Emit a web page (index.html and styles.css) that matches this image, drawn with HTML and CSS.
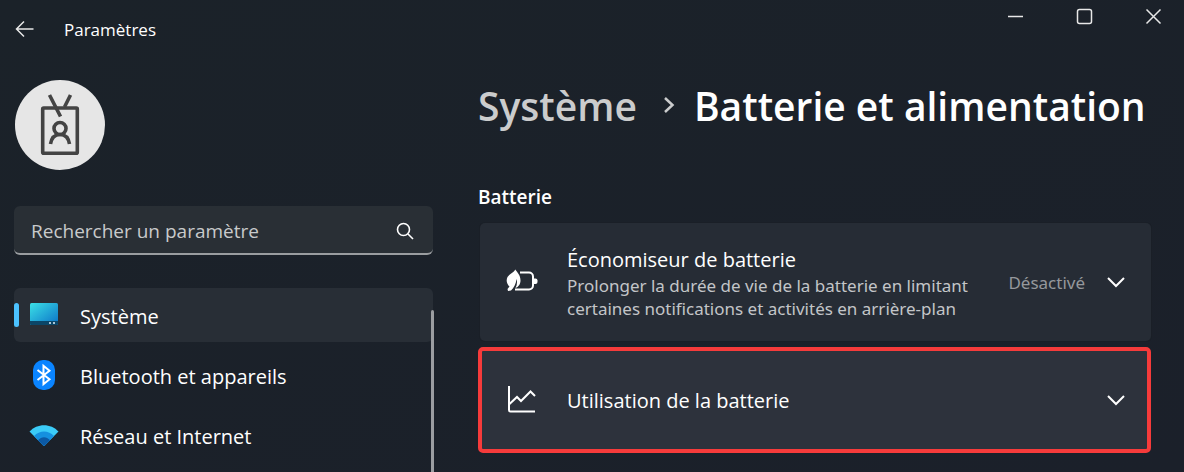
FILE: index.html
```html
<!DOCTYPE html>
<html lang="fr">
  <head>
    <meta charset="UTF-8" />
    <meta name="viewport" content="width=device-width, initial-scale=1.0" />
    <title>Paramètres</title>
    <link rel="stylesheet" href="styles.css">
  </head>
  <body>
    <header class="titlebar">
      <button class="back" type="button" aria-label="Retour">
        <svg width="20" height="18" viewBox="0 0 20 18"><path d="M9 1.5 1.5 9 9 16.500M1.500 9H18.500" /></svg>
      </button>
      <span class="app-name">Paramètres</span>
      <div class="window-controls">
        <button type="button" aria-label="Réduire">
          <svg width="17" height="17" viewBox="0 0 17 17"><path d="M1 8.500H16" /></svg>
        </button>
        <button type="button" aria-label="Agrandir">
          <svg width="17" height="17" viewBox="0 0 17 17"><rect x="1.500" y="1.500" width="14" height="14" rx="2" /></svg>
        </button>
        <button type="button" aria-label="Fermer">
          <svg width="17" height="17" viewBox="0 0 17 17"><path d="M1.500 1.500 15.500 15.500M15.500 1.500 1.500 15.500" /></svg>
        </button>
      </div>
    </header>

    <div class="layout">
      <aside class="sidebar">
        <div class="avatar">
          <svg width="90" height="90" viewBox="0 0 90 90">
            <rect x="27.700" y="28" width="34.600" height="45.300" rx="1" />
            <path d="M34.500 15 45.500 36.500M55.500 15 49.500 27" />
            <circle cx="45" cy="48.500" r="6" />
            <path d="M35.500 64c1-6 4.500-9.500 9.500-9.500s8.500 3.500 9.500 9.500" />
          </svg>
        </div>

        <form class="search">
          <input type="search" placeholder="Rechercher un paramètre" aria-label="Rechercher un paramètre" />
          <button type="button" aria-label="Rechercher">
            <svg width="18" height="18" viewBox="0 0 18 18"><circle cx="7.500" cy="7.500" r="6" /><path d="m12 12 5 5" /></svg>
          </button>
        </form>

        <nav class="menu">
          <a class="active" href="#">
            <svg width="30" height="30" viewBox="0 0 30 30">
              <defs>
                <linearGradient id="screen" x1="0" y1="0" x2="1" y2="1">
                  <stop offset="0" stop-color="#3be0e6" />
                  <stop offset="1" stop-color="#0b71c7" />
                </linearGradient>
              </defs>
              <rect x="1" y="3" width="28" height="22" rx="1.500" fill="url(#screen)" />
              <path d="M1 21h28v2.500a1.500 1.500 0 0 1-1.500 1.500h-25A1.500 1.500 0 0 1 1 23.500z" fill="#0b4668" />
              <path d="M20 22h2v2h-2zM24 22h2v2h-2z" fill="#a9c4d6" />
            </svg>
            <span>Système</span>
          </a>
          <a href="#">
            <svg width="30" height="30" viewBox="0 0 30 30">
              <rect x="4" width="22" height="30" rx="10" fill="#0a84ff" />
              <path d="m8.500 10 12 9.200-6 5v-18.400l6 5-12 9.200" fill="none" stroke="#fff" stroke-width="2" />
            </svg>
            <span>Bluetooth et appareils</span>
          </a>
          <a href="#">
            <svg width="30" height="30" viewBox="0 0 30 30">
              <path d="M.500 11.500C8 3 22 3 29.500 11.500L16 25.300q-1 1-2 0z" fill="#3bcbf7" />
              <path d="M5 16.100c5.500-6 14.500-6 20 0l-9 9.200q-1 1-2 0z" fill="#1590df" />
              <path d="M9 20.200c3.500-4 8.500-4 12 0l-5 5.100q-1 1-2 0z" fill="#0c59a4" />
            </svg>
            <span>Réseau et Internet</span>
          </a>
          <span class="scrollbar"></span>
        </nav>
      </aside>

      <main class="content">
        <h1 class="breadcrumb">
          <a href="#">Système</a>
          <svg width="12" height="18" viewBox="0 0 12 18"><path d="m2 2 7.500 7L2 16" /></svg>
          <span>Batterie et alimentation</span>
        </h1>

        <h2 class="section-title">Batterie</h2>

        <div class="cards">
          <button class="card" type="button">
            <svg class="card-icon" width="32" height="32" viewBox="0 0 32 32">
              <path d="M14 6.500h9a4 4 0 0 1 4 4v9a4 4 0 0 1-4 4H9" />
              <path class="solid" d="M27 12.500h2.500q2 0 2 2v1.500q0 2-2 2H27z" />
              <path class="solid" d="M9.300 3.500C11 6 14.500 9 14.500 14.500c0 3.500-2 6.500-5 7.500 1.500-3 2-6 1-9-.500 5-2.500 8.500-5.500 11.500l-3 .500-.500-2 2-2.500C.500 17.500 0 14 1.500 11 3 8 7 7.500 9.300 3.500z" />
            </svg>
            <span class="card-text">
              <span class="card-title">Économiseur de batterie</span>
              <span class="card-info">Prolonger la durée de vie de la batterie en limitant certaines notifications et activités en arrière-plan</span>
            </span>
            <span class="card-state">Désactivé</span>
            <svg class="chevron" width="18" height="12" viewBox="0 0 18 12"><path d="m1 2 8 8 8-8" /></svg>
          </button>

          <button class="card highlighted" type="button">
            <svg class="card-icon" width="32" height="32" viewBox="0 0 32 32">
              <path d="M3 2v24q0 1.500 1.500 1.500H29M3.500 20 11 13l4 4L24.500 7.500l4.500 4.500" />
            </svg>
            <span class="card-text">
              <span class="card-title">Utilisation de la batterie</span>
            </span>
            <svg class="chevron" width="18" height="12" viewBox="0 0 18 12"><path d="m1 2 8 8 8-8" /></svg>
          </button>
        </div>
      </main>
    </div>
  </body>
</html>
```

FILE: styles.css
```css
* {
  margin: 0;
  padding: 0;
  box-sizing: border-box;
}

body {
  font-family: "Open Sans", "Noto Sans", sans-serif;
  font-size: 20px;
  color: #fff;
  background: linear-gradient(160deg, #1b2229, #1b202a);
  height: 100vh;
  overflow: hidden;
  display: flex;
  flex-direction: column;
}

button {
  font: inherit;
  color: inherit;
  background: none;
  border: none;
}

a {
  color: inherit;
  text-decoration: none;
}

svg {
  display: block;
  flex-shrink: 0;
}

/* Title bar */
.titlebar {
  display: flex;
  align-items: center;
  height: 58px;
  padding-left: 15px;
}
.titlebar svg {
  fill: none;
  stroke: #e8e8e8;
  stroke-width: 1.5;
}
.app-name {
  margin-left: 29px;
  font-size: 17px;
}
.window-controls {
  display: flex;
  gap: 7px;
  align-self: flex-start;
  margin-left: auto;
}
.window-controls button {
  display: flex;
  align-items: center;
  justify-content: center;
  width: 62px;
  height: 33px;
}

.layout {
  flex: 1;
  min-height: 0;
  display: grid;
  grid-template-columns: 419px minmax(0, 1fr);
  gap: 45px;
  padding: 0 33px 0 14px;
}

/* Sidebar */
.sidebar {
  display: flex;
  flex-direction: column;
  min-height: 0;
  padding-top: 22px;
}
.avatar {
  width: 90px;
  height: 90px;
  margin-left: 1px;
  border-radius: 50%;
  background: #e6e6e6;
}
.avatar svg {
  fill: none;
  stroke: #444;
  stroke-width: 3.6;
}
.search {
  display: flex;
  align-items: center;
  height: 49px;
  margin-top: 36px;
  padding: 3px 19px 0 17px;
  background: #292f35;
  border-bottom: 2px solid #9a9da0;
  border-radius: 6px;
}
.search input {
  flex: 1;
  min-width: 0;
  font: inherit;
  font-size: 19px;
  color: #fff;
  background: none;
  border: none;
  outline: none;
}
.search input::placeholder {
  color: #c8cacb;
  opacity: 1;
}
.search svg {
  fill: none;
  stroke: #fff;
  stroke-width: 1.6;
}
.menu {
  position: relative;
  flex: 1;
  display: flex;
  flex-direction: column;
  gap: 6px;
  margin-top: 33px;
}
.menu a {
  display: flex;
  align-items: center;
  gap: 21px;
  height: 54px;
  flex-shrink: 0;
  padding-left: 15px;
  border-radius: 6px;
}
.menu a span {
  padding-top: 2px;
}
.menu .active {
  position: relative;
  background: #282e36;
}
.menu .active::before {
  content: "";
  position: absolute;
  left: 0;
  top: 15px;
  width: 5px;
  height: 24px;
  border-radius: 3px;
  background: #4cc2ff;
}
.scrollbar {
  position: absolute;
  right: -1px;
  top: 22px;
  bottom: 0;
  width: 3px;
  border-radius: 3px 3px 0 0;
  background: #9b9da1;
}

/* Content */
.breadcrumb {
  display: flex;
  align-items: center;
  height: 60px;
  margin-top: 17px;
  font-size: 39px;
  font-weight: 600;
  white-space: nowrap;
}
.breadcrumb a {
  color: #cbcccd;
}
.breadcrumb svg {
  margin: 0 19px 0 26px;
  fill: none;
  stroke: #cbcccd;
  stroke-width: 2.5;
}
.section-title {
  margin-top: 47px;
  font-size: 19px;
  font-weight: 600;
  line-height: 30px;
}
.cards {
  display: flex;
  flex-direction: column;
  gap: 6px;
  margin-top: 11px;
}
.card {
  display: flex;
  align-items: center;
  min-height: 118px;
  margin-left: 2px;
  padding: 0 26px;
  text-align: left;
  border-radius: 5px;
  background: #262c35;
  box-shadow: 0 0 0 1px #1a1f27;
}
.card svg {
  fill: none;
  stroke: #fff;
  stroke-width: 2;
}
.card .solid {
  fill: #fff;
  stroke: none;
}
.card-text {
  flex: 1;
  display: flex;
  flex-direction: column;
  margin-left: 29px;
  padding-top: 2px;
}
.card-title {
  line-height: 28px;
}
.card-info {
  font-family: "Noto Sans", sans-serif;
  font-size: 17px;
  line-height: 23px;
  color: #c3c5c8;
}
.card-state {
  margin: 0 22px;
  font-family: "Noto Sans", sans-serif;
  font-size: 17px;
  color: #95989c;
}
.highlighted {
  min-height: 106px;
  margin-left: 0;
  padding: 0 22px 0 24px;
  background: #2d323c;
  border: 4px solid #f63b3b;
  box-shadow: none;
}
```
